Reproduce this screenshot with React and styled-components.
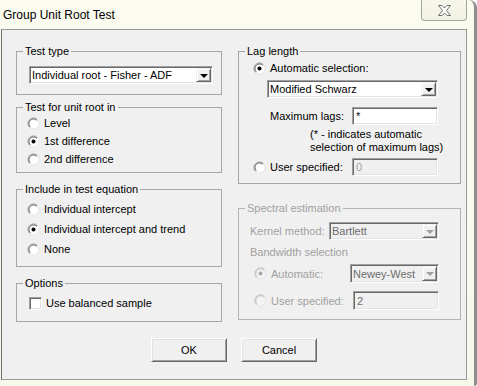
import styled, { createGlobalStyle } from 'styled-components';

const GlobalStyle = createGlobalStyle`
  html, body {
    margin: 0;
    padding: 0;
    background: #ffffff;
  }
  body {
    font-family: "Liberation Sans", Arial, sans-serif;
    font-size: 11px;
    color: #000;
  }
`;

function RadioIcon({ checked, disabled }) {
  return (
    <svg width="13" height="13" viewBox="0 0 13 13">
      <circle cx="6.5" cy="6.5" r="5.5" fill={disabled ? '#f4f4f4' : '#ffffff'} stroke="#e4e4e4" />
      <path d="M2.6 10.4 A5.5 5.5 0 0 1 10.4 2.6" fill="none" stroke={disabled ? '#b8b8b8' : '#9a9a9a'} />
      <path d="M3.3 9.7 A4.5 4.5 0 0 1 9.7 3.3" fill="none" stroke={disabled ? '#cfcfcf' : '#6a6a6a'} />
      {checked && <circle cx="6.5" cy="6.5" r="2" fill={disabled ? '#a8a8a8' : '#000000'} />}
    </svg>
  );
}

function CloseGlyph() {
  return (
    <svg width="15" height="11" viewBox="0 0 15 11">
      <path
        d="M1.5 0.5 H5 L7.5 3 L10 0.5 H13.5 L9.5 5.5 L13.5 10.5 H10 L7.5 8 L5 10.5 H1.5 L5.5 5.5 Z"
        fill="#ffffff"
        stroke="#6f6f6f"
        strokeLinejoin="round"
      />
    </svg>
  );
}

function Combo({ value, width, height = 18, disabled }) {
  return (
    <ComboBox $w={width} $h={height} $disabled={disabled}>
      <ComboText>{value}</ComboText>
      <ArrowButton $disabled={disabled}>
        <Arrow $disabled={disabled} />
      </ArrowButton>
    </ComboBox>
  );
}

function Radio({ label, checked, disabled }) {
  return (
    <RadioLabel $disabled={disabled}>
      <RadioIcon checked={checked} disabled={disabled} />
      <span>{label}</span>
    </RadioLabel>
  );
}

export default function App() {
  return (
    <>
      <GlobalStyle />
      <Window>
        <TitleBar>
          <Title>Group Unit Root Test</Title>
          <CloseButton>
            <CloseGlyph />
          </CloseButton>
        </TitleBar>
        <Client>
          <Columns>
            <Column>
              <Group $h={51}>
                <Legend>Test type</Legend>
                <Indent $left={12} $top={8}>
                  <Combo value="Individual root - Fisher - ADF" width={184} />
                </Indent>
              </Group>

              <Group $h={73} $mt={5}>
                <Legend>Test for unit root in</Legend>
                <Indent $left={10}>
                  <Row $h={18}><Radio label="Level" /></Row>
                  <Row $h={18}><Radio label="1st difference" checked /></Row>
                  <Row $h={18}><Radio label="2nd difference" /></Row>
                </Indent>
              </Group>

              <Group $h={85} $mt={9}>
                <Legend>Include in test equation</Legend>
                <Indent $left={10} $top={3}>
                  <Row $h={20}><Radio label="Individual intercept" /></Row>
                  <Row $h={20}><Radio label="Individual intercept and trend" checked /></Row>
                  <Row $h={20}><Radio label="None" /></Row>
                </Indent>
              </Group>

              <Group $h={46} $mt={9}>
                <Legend>Options</Legend>
                <Indent $left={12} $top={4}>
                  <Row $h={18}>
                    <CheckLabel>
                      <CheckBox />
                      <span>Use balanced sample</span>
                    </CheckLabel>
                  </Row>
                </Indent>
              </Group>
            </Column>

            <Column>
              <Group $h={140}>
                <Legend>Lag length</Legend>
                <Indent $left={14} $top={1}>
                  <Row $h={18}><Radio label="Automatic selection:" checked /></Row>
                  <Indent $left={14} $top={3}>
                    <Combo value="Modified Schwarz" width={171} />
                  </Indent>
                  <FieldRow $first={99} $top={9}>
                    <FieldLabel $pad={17}>Maximum lags:</FieldLabel>
                    <TextBox $w={86}>*</TextBox>
                  </FieldRow>
                  <Note>
                    (* - indicates automatic
                    <br />
                    selection of maximum lags)
                  </Note>
                  <FieldRow $first={99} $top={4}>
                    <Radio label="User specified:" />
                    <TextBox $w={86} $disabled>0</TextBox>
                  </FieldRow>
                </Indent>
              </Group>

              <Group $h={119} $mt={17} $dim>
                <Legend $disabled>Spectral estimation</Legend>
                <Indent $left={11}>
                  <FieldRow $first={79} $top={7}>
                    <FieldLabel $disabled>Kernel method:</FieldLabel>
                    <Combo value="Bartlett" width={110} disabled />
                  </FieldRow>
                  <SubHeading>Bandwidth selection</SubHeading>
                  <Indent $left={4}>
                    <FieldRow $first={96} $top={5}>
                      <Radio label="Automatic:" checked disabled />
                      <Combo value="Newey-West" width={89} height={19} disabled />
                    </FieldRow>
                    <FieldRow $first={99} $top={8}>
                      <Radio label="User specified:" disabled />
                      <TextBox $w={86} $h={19} $disabled $dark>2</TextBox>
                    </FieldRow>
                  </Indent>
                </Indent>
              </Group>
            </Column>
          </Columns>

          <ButtonBar>
            <PushButton>OK</PushButton>
            <PushButton>Cancel</PushButton>
          </ButtonBar>
        </Client>
      </Window>
    </>
  );
}

const Window = styled.div`
  width: 477px;
  height: 386px;
  box-sizing: border-box;
  display: flex;
  flex-direction: column;
  padding: 0 7px 6px 1px;
  background: linear-gradient(180deg, #fbfbef 0%, #f8f8ea 100%);
  border-right: 3px solid #8e8e8e;
  border-top-right-radius: 8px;
  border-bottom-right-radius: 3px;
`;

const TitleBar = styled.div`
  height: 29px;
  display: flex;
  justify-content: space-between;
  align-items: flex-start;
`;

const Title = styled.div`
  padding: 8px 0 0 2px;
  font-size: 12px;
  line-height: 14px;
  color: #000;
`;

const CloseButton = styled.div`
  width: 46px;
  height: 21px;
  box-sizing: border-box;
  display: flex;
  align-items: center;
  justify-content: center;
  border: 1px solid #a3a3a3;
  border-top: none;
  border-radius: 0 0 4px 4px;
  background: linear-gradient(180deg, #f6f6ea 0%, #f1f1e4 100%);
`;

const Client = styled.div`
  flex: 1;
  display: flex;
  flex-direction: column;
  background: #f0f0f0;
  border: 1px solid #9a9a9a;
  border-left-color: #6e6e6e;
  padding: 14px 0 0 14px;
`;

const Columns = styled.div`
  display: grid;
  grid-template-columns: 206px 223px;
  column-gap: 16px;
  align-items: start;
`;

const Column = styled.div`
  display: flex;
  flex-direction: column;
`;

const Group = styled.fieldset`
  margin: ${(p) => p.$mt || 0}px 0 0 0;
  padding: 0;
  min-width: 0;
  box-sizing: border-box;
  height: ${(p) => p.$h}px;
  border: 1px solid ${(p) => (p.$dim ? '#b4b4b4' : '#a6a6a6')};
`;

const Legend = styled.legend`
  margin-left: 6px;
  padding: 0 2px;
  line-height: 14px;
  color: ${(p) => (p.$disabled ? '#a0a0a0' : '#000')};
`;

const Indent = styled.div`
  padding-left: ${(p) => p.$left || 0}px;
  margin-top: ${(p) => p.$top || 0}px;
`;

const Row = styled.div`
  height: ${(p) => p.$h}px;
  display: flex;
  align-items: center;
`;

const RadioLabel = styled.label`
  display: flex;
  align-items: center;
  gap: 4px;
  white-space: nowrap;
  color: ${(p) => (p.$disabled ? '#a0a0a0' : '#000')};

  svg {
    flex: none;
  }
`;

const CheckLabel = styled.label`
  display: flex;
  align-items: center;
  gap: 4px;
`;

const CheckBox = styled.span`
  width: 13px;
  height: 13px;
  box-sizing: border-box;
  background: #fff;
  border: 1px solid;
  border-color: #a0a0a0 #ffffff #ffffff #a0a0a0;
  box-shadow: inset 1px 1px 0 #696969, inset -1px -1px 0 #e3e3e3;
`;

const ComboBox = styled.div`
  width: ${(p) => p.$w}px;
  height: ${(p) => p.$h}px;
  box-sizing: border-box;
  display: flex;
  align-items: stretch;
  background: ${(p) => (p.$disabled ? '#f0f0f0' : '#ffffff')};
  border: 1px solid;
  border-color: #a0a0a0 #ffffff #ffffff #a0a0a0;
  box-shadow: inset 1px 1px 0 #696969, inset -1px -1px 0 #e3e3e3;
  padding: 1px;
  color: ${(p) => (p.$disabled ? '#6d6d6d' : '#000')};
`;

const ComboText = styled.div`
  flex: 1;
  display: flex;
  align-items: center;
  padding-left: 1px;
  white-space: nowrap;
  overflow: hidden;
`;

const ArrowButton = styled.div`
  width: 15px;
  box-sizing: border-box;
  display: flex;
  align-items: center;
  justify-content: center;
  background: #f0f0f0;
  border: 1px solid;
  border-color: #f0f0f0 #696969 #696969 #f0f0f0;
  box-shadow: inset 1px 1px 0 #ffffff, inset -1px -1px 0 #a0a0a0;
`;

const Arrow = styled.span`
  width: 0;
  height: 0;
  border-left: 4px solid transparent;
  border-right: 4px solid transparent;
  border-top: 4px solid ${(p) => (p.$disabled ? '#a0a0a0' : '#000')};
  margin-top: 1px;
`;

const FieldRow = styled.div`
  display: grid;
  grid-template-columns: ${(p) => p.$first}px auto;
  align-items: center;
  margin-top: ${(p) => p.$top || 0}px;
`;

const FieldLabel = styled.span`
  padding-left: ${(p) => p.$pad || 0}px;
  white-space: nowrap;
  color: ${(p) => (p.$disabled ? '#a0a0a0' : '#000')};
`;

const TextBox = styled.div`
  width: ${(p) => p.$w}px;
  height: ${(p) => p.$h || 18}px;
  box-sizing: border-box;
  display: flex;
  align-items: center;
  padding-left: 3px;
  background: ${(p) => (p.$disabled ? '#f0f0f0' : '#ffffff')};
  color: ${(p) => (p.$dark ? '#6d6d6d' : p.$disabled ? '#a0a0a0' : '#000')};
  border: 1px solid;
  border-color: #a0a0a0 #ffffff #ffffff #a0a0a0;
  box-shadow: inset 1px 1px 0 #696969, inset -1px -1px 0 #e3e3e3;
`;

const Note = styled.div`
  margin-top: 3px;
  padding-left: 57px;
  line-height: 13px;
`;

const SubHeading = styled.div`
  margin-top: 6px;
  line-height: 13px;
  color: #a0a0a0;
`;

const ButtonBar = styled.div`
  display: flex;
  justify-content: center;
  gap: 14px;
  margin: 16px 0 0 -14px;
`;

const PushButton = styled.button`
  width: 76px;
  height: 24px;
  box-sizing: border-box;
  padding: 0;
  font: inherit;
  color: #000;
  background: #f0f0f0;
  border: 1px solid;
  border-color: #ffffff #696969 #696969 #ffffff;
  box-shadow: inset 1px 1px 0 #e3e3e3, inset -1px -1px 0 #a0a0a0;
`;
